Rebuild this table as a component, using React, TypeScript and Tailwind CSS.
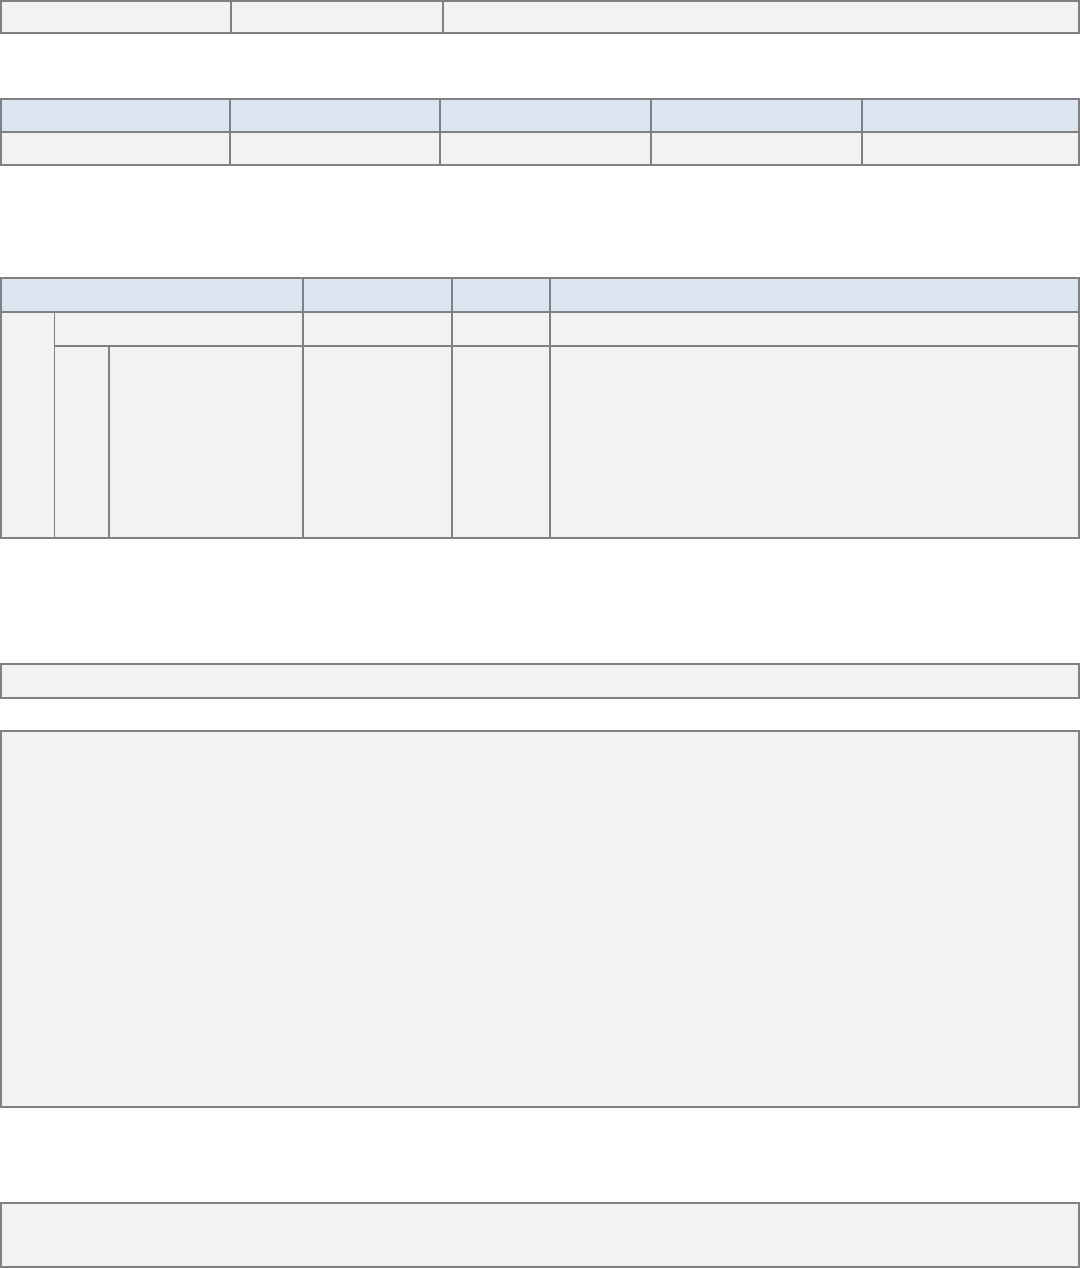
import React from "react";

const cell = "bg-[#f2f2f2]";
const head = "bg-[#dbe5f1]";

function Box({ className, children }: { className: string; children?: React.ReactNode }) {
    return <div className={`border-2 border-[#808080] bg-[#808080] ${className}`}>{children}</div>;
}

export default function App() {
    return (
        <div className="w-[1080px] bg-white" style={{ fontFamily: '"Liberation Sans", Arial, sans-serif' }}>
            {/* summary row */}
            <Box className="grid grid-cols-[228px_210px_1fr] gap-[2px] h-[34px]">
                <div className={cell} />
                <div className={cell} />
                <div className={cell} />
            </Box>

            {/* five-column table */}
            <Box className="mt-[64px] grid grid-cols-[227px_208px_209px_209px_1fr] grid-rows-[31px_31px] gap-[2px]">
                {[0, 1, 2, 3, 4].map((i) => (
                    <div key={"h" + i} className={head} />
                ))}
                {[0, 1, 2, 3, 4].map((i) => (
                    <div key={"b" + i} className={cell} />
                ))}
            </Box>

            {/* nested table */}
            <Box className="mt-[111px] grid grid-cols-[52px_52px_192px_147px_96px_1fr] grid-rows-[32px_32px_190px] gap-[2px]">
                <div className={`${head} col-span-3`} />
                <div className={head} />
                <div className={head} />
                <div className={head} />

                <div className={`${cell} row-span-2`} />
                <div className={`${cell} col-span-2 -ml-px`} />
                <div className={cell} />
                <div className={cell} />
                <div className={cell} />

                <div className={`${cell} -ml-px`} />
                <div className={cell} />
                <div className={cell} />
                <div className={cell} />
                <div className={cell} />
            </Box>

            {/* single bar */}
            <Box className="mt-[124px] h-[36px] flex">
                <div className={`${cell} flex-1`} />
            </Box>

            {/* large block */}
            <Box className="mt-[31px] h-[378px] flex">
                <div className={`${cell} flex-1`} />
            </Box>

            {/* bottom block */}
            <Box className="mt-[94px] h-[66px] flex">
                <div className={`${cell} flex-1`} />
            </Box>
        </div>
    );
}
